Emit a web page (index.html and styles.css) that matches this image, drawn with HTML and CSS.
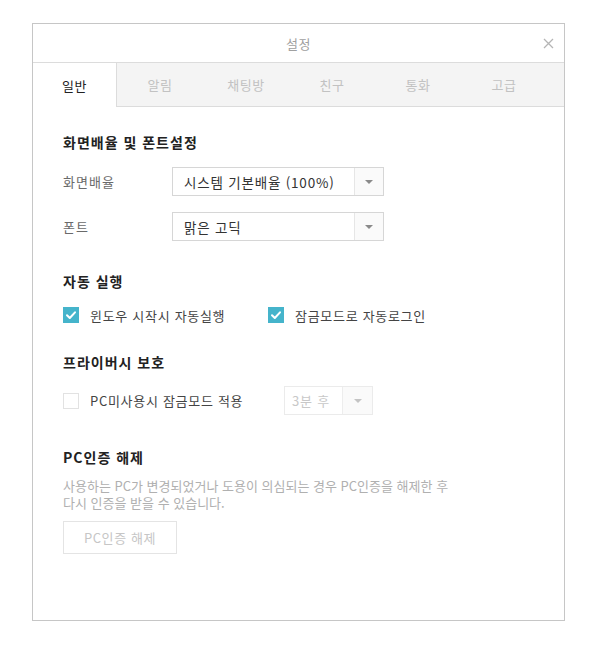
FILE: index.html
```html
<!DOCTYPE html>
<html lang="ko">
<head>
<meta charset="utf-8">
<title>설정</title>
<link rel="stylesheet" href="styles.css">
</head>
<body>
<div class="window">
  <div class="titlebar">
    <span class="title">설정</span>
    <svg class="close" width="11" height="11" viewBox="0 0 11 11"><path d="M1 1L10 10M10 1L1 10" stroke="#b5b5b5" stroke-width="1.3" fill="none"/></svg>
  </div>
  <div class="tabs">
    <div class="tab active">일반</div>
    <div class="tabrest">
      <div class="tab">알림</div>
      <div class="tab">채팅방</div>
      <div class="tab">친구</div>
      <div class="tab">통화</div>
      <div class="tab">고급</div>
    </div>
  </div>
  <div class="content">
    <h2 class="heading">화면배율 및 폰트설정</h2>
    <div class="row row-first">
      <span class="label">화면배율</span>
      <div class="select"><span class="sel-text">시스템 기본배율 (100%)</span><span class="sel-arrow"><i class="tri"></i></span></div>
    </div>
    <div class="row row-second">
      <span class="label">폰트</span>
      <div class="select"><span class="sel-text">맑은 고딕</span><span class="sel-arrow"><i class="tri"></i></span></div>
    </div>

    <h2 class="heading h-auto">자동 실행</h2>
    <div class="checks">
      <label class="check w1"><span class="box on"><svg width="16" height="16" viewBox="0 0 16 16"><path d="M4 8.2L6.8 11L12 5.3" stroke="#fff" stroke-width="2" fill="none" stroke-linecap="round" stroke-linejoin="round"/></svg></span>윈도우 시작시 자동실행</label>
      <label class="check"><span class="box on"><svg width="16" height="16" viewBox="0 0 16 16"><path d="M4 8.2L6.8 11L12 5.3" stroke="#fff" stroke-width="2" fill="none" stroke-linecap="round" stroke-linejoin="round"/></svg></span>잠금모드로 자동로그인</label>
    </div>

    <h2 class="heading h-privacy">프라이버시 보호</h2>
    <div class="checks privacy">
      <label class="check w2"><span class="box"></span>PC미사용시 잠금모드 적용</label>
      <div class="select small disabled"><span class="sel-text">3분 후</span><span class="sel-arrow"><i class="tri"></i></span></div>
    </div>

    <h2 class="heading h-pc">PC인증 해제</h2>
    <p class="desc">사용하는 PC가 변경되었거나 도용이 의심되는 경우 PC인증을 해제한 후<br>다시 인증을 받을 수 있습니다.</p>
    <button class="btn" disabled>PC인증 해제</button>
  </div>
</div>
</body>
</html>
```
FILE: styles.css
```css
* { box-sizing: border-box; }
html, body { margin: 0; padding: 0; background: #fff; }
body {
  font-family: "Noto Sans CJK KR", "Noto Sans", sans-serif;
  font-size: 13px;
  color: #333;
}
.window {
  margin: 23px 0 0 32px;
  width: 533px;
  height: 598px;
  border: 1px solid #c6c6c6;
  background: #fff;
  display: flex;
  flex-direction: column;
}
.titlebar {
  height: 39px;
  border-bottom: 1px solid #dcdcdc;
  display: flex;
  align-items: center;
  justify-content: center;
  position: relative;
}
.title { color: #a0a0a0; font-size: 13px; letter-spacing: 0.5px; }
.close { position: absolute; right: 10px; top: 14px; }
.tabs {
  display: flex;
  height: 44px;
}
.tab {
  width: 86px;
  display: flex;
  align-items: center;
  justify-content: center;
  color: #c2c2c2;
  font-size: 13px;
  letter-spacing: 0.6px;
}
.tab.active {
  width: 83px;
  color: #222;
  background: #fff;
}
.tabrest {
  flex: 1;
  display: flex;
  background: #f4f4f4;
  border-left: 1px solid #dcdcdc;
  border-bottom: 1px solid #dcdcdc;
}
.content {
  padding: 25px 30px 0 30px;
}
.heading {
  margin: 0;
  font-size: 14px;
  font-weight: bold;
  line-height: 20px;
  color: #222;
  letter-spacing: 1px;
}
.row {
  display: flex;
  align-items: center;
  height: 29px;
}
.row-first { margin-top: 15px; }
.row-second { margin-top: 16px; }
.label {
  width: 109px;
  color: #6a6a6a;
  letter-spacing: 1px;
}
.select {
  width: 212px;
  height: 29px;
  border: 1px solid #d6d6d6;
  display: flex;
  align-items: stretch;
  background: #fff;
}
.sel-text {
  flex: 1;
  display: flex;
  align-items: center;
  padding-left: 11px;
  color: #333;
  font-size: 13.5px;
  letter-spacing: 0.8px;
}
.sel-arrow {
  width: 29px;
  border-left: 1px solid #e6e6e6;
  background: #fafafa;
  display: flex;
  align-items: center;
  justify-content: center;
}
.tri {
  width: 0; height: 0;
  border-left: 4px solid transparent;
  border-right: 4px solid transparent;
  border-top: 4px solid #8a8a8a;
}
.h-auto { margin-top: 30px; }
.checks {
  display: flex;
  align-items: center;
  margin-top: 14px;
  height: 20px;
}
.check {
  display: flex;
  align-items: center;
  color: #444;
  letter-spacing: 0.7px;
}
.w1 { width: 205px; }
.w2 { width: 221px; }
.box {
  width: 16px;
  height: 16px;
  margin-right: 11px;
  border: 1px solid #e2e2e2;
  background: #fff;
  display: inline-flex;
}
.box.on {
  background: #45b4cb;
  border: none;
}
.h-privacy { margin-top: 27px; }
.checks.privacy {
  margin-top: 14px;
  height: 29px;
}
.select.small {
  width: 89px;
}
.select.disabled { border-color: #ebebeb; }
.select.disabled .sel-text { color: #c8c8c8; padding-left: 7px; font-size: 13px; }
.select.disabled .sel-arrow { width: 30px; border-left-color: #ededed; }
.select.disabled .tri { border-top-color: #c4c4c4; }
.h-pc { margin-top: 32px; }
.desc {
  margin: 10px 0 0 0;
  line-height: 17px;
  color: #b0b0b0;
}
.btn {
  margin-top: 10px;
  width: 114px;
  height: 33px;
  border: 1px solid #e4e4e4;
  background: #fff;
  color: #c6c6c6;
  font-family: inherit;
  font-size: 13px;
  letter-spacing: 0.6px;
  padding: 0;
}
```
